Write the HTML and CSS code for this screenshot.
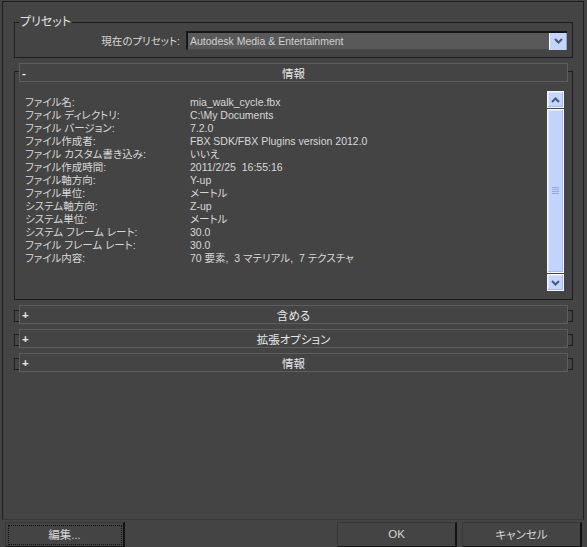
FILE: index.html
```html
<!DOCTYPE html>
<html lang="ja">
<head>
    <meta charset="UTF-8">
    <title>FBX エクスポート</title>
    <link rel="stylesheet" href="styles.css">
</head>
<body>
    <div class="panel">
        <fieldset class="group">
            <legend>プリセット</legend>
            <div class="preset-row">
                <span>現在のプリセット:</span>
                <div class="combo">
                    <span class="combo-text">Autodesk Media &amp; Entertainment</span>
                    <span class="combo-btn">
                        <svg width="9" height="6" viewBox="0 0 9 6"><path d="M1 1 L4.5 4.5 L8 1" fill="none" stroke="#4a5878" stroke-width="2"/></svg>
                    </span>
                </div>
            </div>
        </fieldset>

        <div class="rollout">
            <div class="rollout-head"><span class="sign">-</span><span class="title">情報</span><span></span></div>
            <div class="rollout-body">
                <div class="info">
                    <span>ファイル名:</span><span>mia_walk_cycle.fbx</span>
                    <span>ファイル ディレクトリ:</span><span>C:\My Documents</span>
                    <span>ファイル バージョン:</span><span>7.2.0</span>
                    <span>ファイル作成者:</span><span>FBX SDK/FBX Plugins version 2012.0</span>
                    <span>ファイル カスタム書き込み:</span><span>いいえ</span>
                    <span>ファイル作成時間:</span><span>2011/2/25&nbsp; 16:55:16</span>
                    <span>ファイル軸方向:</span><span>Y-up</span>
                    <span>ファイル単位:</span><span>メートル</span>
                    <span>システム軸方向:</span><span>Z-up</span>
                    <span>システム単位:</span><span>メートル</span>
                    <span>システム フレーム レート:</span><span>30.0</span>
                    <span>ファイル フレーム レート:</span><span>30.0</span>
                    <span>ファイル内容:</span><span>70 要素,&nbsp; 3 マテリアル,&nbsp; 7 テクスチャ</span>
                </div>
                <div class="scrollbar">
                    <div class="sb-btn">
                        <svg width="9" height="6" viewBox="0 0 9 6"><path d="M1 5 L4.5 1.5 L8 5" fill="none" stroke="#4a5878" stroke-width="2"/></svg>
                    </div>
                    <div class="sb-thumb">
                        <svg width="7" height="8" viewBox="0 0 7 8"><path d="M0 0.5H7M0 2.5H7M0 4.5H7M0 6.5H7" stroke="#8fa9ea" stroke-width="1"/></svg>
                    </div>
                    <div class="sb-btn">
                        <svg width="9" height="6" viewBox="0 0 9 6"><path d="M1 1 L4.5 4.5 L8 1" fill="none" stroke="#4a5878" stroke-width="2"/></svg>
                    </div>
                </div>
            </div>
        </div>

        <div class="rollout closed first">
            <div class="rollout-head"><span class="sign">+</span><span class="title">含める</span><span></span></div>
        </div>
        <div class="rollout closed">
            <div class="rollout-head"><span class="sign">+</span><span class="title">拡張オプション</span><span></span></div>
        </div>
        <div class="rollout closed">
            <div class="rollout-head"><span class="sign">+</span><span class="title">情報</span><span></span></div>
        </div>
    </div>

    <div class="buttons">
        <button class="btn focused">編集...</button>
        <div class="spacer"></div>
        <button class="btn">OK</button>
        <button class="btn">キャンセル</button>
    </div>
</body>
</html>
```

FILE: styles.css
```css
body {
    margin: 0;
    width: 587px;
    height: 547px;
    overflow: hidden;
    background-color: #444444;
    color: #d8d8d8;
    font-family: "Liberation Sans", "Noto Sans CJK JP", sans-serif;
    font-size: 10.5px;
    font-feature-settings: "palt";
}
.panel {
    margin: 1px 3px 0 2px;
    height: 519px;
    box-sizing: border-box;
    border: 1px solid #1e1e1e;
    border-bottom-color: #383838;
    overflow: hidden;
}
.group {
    margin: 14px 10px 0 11px;
    padding: 3px 5px 7px 4px;
    border: 1px solid #1c1c1c;
    min-inline-size: 0;
}
.group legend {
    padding: 0 1px;
    font-size: 12px;
    line-height: 12px;
    color: #e2e2e2;
}
.preset-row {
    display: flex;
    justify-content: flex-end;
    align-items: center;
    gap: 6px;
}
.combo {
    width: 381px;
    height: 19px;
    box-sizing: border-box;
    display: flex;
    align-items: center;
    background-color: #595959;
    border-top: 2px solid #161616;
    border-left: 2px solid #161616;
    border-bottom: 1px solid #4a4a4a;
}
.combo-text {
    flex: 1;
    padding-left: 2px;
    color: #d0d0d0;
}
.combo-btn {
    width: 18px;
    height: 17px;
    box-sizing: border-box;
    display: flex;
    align-items: center;
    justify-content: center;
    background-color: #c4d5fb;
    border-left: 1px solid #ffffff;
    border-right: 1px solid #8fa3d2;
}
.rollout {
    margin: 13px 10px 0 11px;
    border: 1px solid #1c1c1c;
}
.rollout-head {
    margin: -9px 4px 0 4px;
    height: 19px;
    box-sizing: border-box;
    border: 1px solid #5e5e5e;
    background-color: #444444;
    display: grid;
    grid-template-columns: 20px 1fr 20px;
    align-items: center;
    font-size: 11.5px;
    color: #e8e8e8;
}
.rollout-head .sign {
    padding-left: 2px;
    font-weight: bold;
}
.rollout-head .title {
    text-align: center;
}
.rollout-body {
    display: flex;
    padding: 9px 8px 8px 10px;
}
.info {
    flex: 1;
    display: grid;
    grid-template-columns: 165px 1fr;
    grid-auto-rows: 13px;
    line-height: 13px;
    margin-top: 5px;
    align-content: start;
    white-space: nowrap;
}
.scrollbar {
    width: 17px;
    height: 200px;
    display: flex;
    flex-direction: column;
    gap: 1px;
}
.sb-btn, .sb-thumb {
    box-sizing: border-box;
    border: 1px solid #f6f9ff;
    background-color: #c4d6fc;
    box-shadow: inset -1px -1px 0 #a3b8ec, inset 1px 1px 0 #dce6ff;
    display: flex;
    align-items: center;
    justify-content: center;
}
.sb-btn {
    height: 17px;
}
.sb-thumb {
    flex: 1;
    background-color: #c2d4fc;
}
.rollout.closed {
    height: 12px;
    box-sizing: border-box;
    margin-top: 12px;
}
.rollout.closed.first {
    margin-top: 10px;
}
.rollout.closed .rollout-head {
    margin-top: -6px;
}
.buttons {
    display: flex;
    gap: 5px;
    margin-top: 2px;
    padding: 0 5px;
}
.spacer {
    flex: 1;
}
.btn {
    width: 120px;
    height: 26px;
    box-sizing: border-box;
    background-color: #444444;
    color: #d4d4d4;
    font-family: "Liberation Sans", "Noto Sans CJK JP", sans-serif;
    font-size: 11.5px;
    font-feature-settings: "palt";
    border-top: 1px solid #383838;
    border-left: 1px solid #383838;
    border-right: 2px solid #121212;
    border-bottom: 2px solid #121212;
    padding: 0 0 2px 0;
}
.btn.focused {
    outline: 1px dotted #111111;
    outline-offset: -4px;
}
```
